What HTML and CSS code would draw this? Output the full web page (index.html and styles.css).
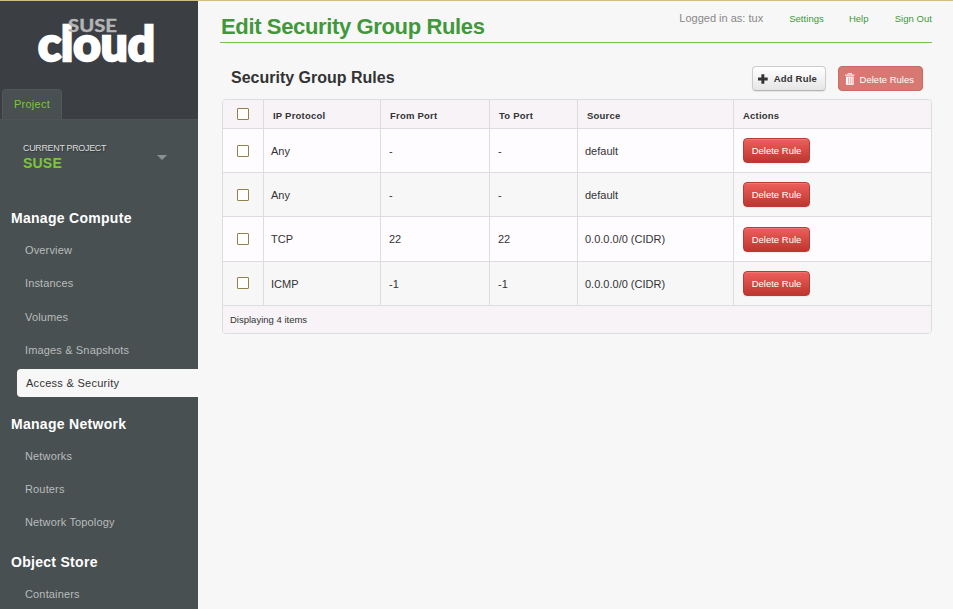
FILE: index.html
```html
<!DOCTYPE html>
<html lang="en">
<head>
<meta charset="utf-8">
<title>Edit Security Group Rules</title>
<link rel="stylesheet" href="styles.css">
</head>
<body>
<div class="layout">
  <aside class="sidebar">
    <header class="brand">
      <svg class="logo" width="118" height="46" viewBox="37 17 118 46" role="img" aria-label="SUSE Cloud">
        <text class="logo-cloud" x="38" y="59.500" textLength="117" lengthAdjust="spacingAndGlyphs">cloud</text>
        <text class="logo-suse" x="68" y="31" textLength="49" lengthAdjust="spacingAndGlyphs">SUSE</text>
      </svg>
      <a class="tab">Project</a>
    </header>
    <div class="project">
      <div>
        <div class="project-label">CURRENT PROJECT</div>
        <div class="project-name">SUSE</div>
      </div>
      <span class="caret"></span>
    </div>
    <nav>
      <h4>Manage Compute</h4>
      <ul>
        <li><a>Overview</a></li>
        <li><a>Instances</a></li>
        <li><a>Volumes</a></li>
        <li><a>Images &amp; Snapshots</a></li>
        <li class="active"><a>Access &amp; Security</a></li>
      </ul>
      <h4>Manage Network</h4>
      <ul>
        <li><a>Networks</a></li>
        <li><a>Routers</a></li>
        <li><a>Network Topology</a></li>
      </ul>
      <h4>Object Store</h4>
      <ul>
        <li><a>Containers</a></li>
      </ul>
    </nav>
  </aside>
  <main class="content">
    <header class="page-header">
      <h1>Edit Security Group Rules</h1>
      <div class="user">
        <span class="who">Logged in as: tux</span>
        <a class="settings">Settings</a>
        <a class="help">Help</a>
        <a>Sign Out</a>
      </div>
    </header>
    <section class="panel">
      <div class="toolbar">
        <h2>Security Group Rules</h2>
        <button class="btn btn-add"><svg width="10" height="10" viewBox="0 0 10 10"><path d="M3.5 0h3v3.5H10v3H6.500V10h-3V6.500H0v-3h3.500z" fill="#333"/></svg><span>Add Rule</span></button>
        <button class="btn btn-delete"><svg width="10" height="12" viewBox="0 0 10 12"><path d="M3 1.500V.5h4v1M0 2h10" fill="none" stroke="#fff"/><path d="M1 3.500h8V12H1z" fill="#fff"/><path d="M3.500 4.500V11M5.500 4.500V11M7.500 4.500V11" stroke="#d9807a" stroke-width=".7"/></svg><span>Delete Rules</span></button>
      </div>
      <table>
        <colgroup><col class="c1"><col class="c2"><col class="c3"><col class="c4"><col class="c5"><col></colgroup>
        <thead>
          <tr><th class="check"><i class="box"></i></th><th>IP Protocol</th><th>From Port</th><th>To Port</th><th>Source</th><th>Actions</th></tr>
        </thead>
        <tbody>
          <tr><td class="check"><i class="box"></i></td><td>Any</td><td>-</td><td>-</td><td>default</td><td class="act"><button class="btn btn-danger">Delete Rule</button></td></tr>
          <tr><td class="check"><i class="box"></i></td><td>Any</td><td>-</td><td>-</td><td>default</td><td class="act"><button class="btn btn-danger">Delete Rule</button></td></tr>
          <tr class="tall"><td class="check"><i class="box"></i></td><td>TCP</td><td>22</td><td>22</td><td>0.0.0.0/0 (CIDR)</td><td class="act"><button class="btn btn-danger">Delete Rule</button></td></tr>
          <tr><td class="check"><i class="box"></i></td><td>ICMP</td><td>-1</td><td>-1</td><td>0.0.0.0/0 (CIDR)</td><td class="act"><button class="btn btn-danger">Delete Rule</button></td></tr>
        </tbody>
        <tfoot><tr><td colspan="6">Displaying 4 items</td></tr></tfoot>
      </table>
    </section>
  </main>
</div>
</body>
</html>
```
FILE: styles.css
```css
* { box-sizing: border-box; }
body {
  margin: 0;
  height: 609px;
  overflow: hidden;
  border-top: 1px solid #d3ba8a;
  background: #f7f7f7;
  color: #333;
  font-family: "Liberation Sans", Arial, sans-serif;
  font-size: 11px;
}
h1, h2, h4, ul { margin: 0; padding: 0; }
.layout { display: flex; height: 608px; }

/* Sidebar */
.sidebar {
  width: 198px;
  flex: none;
  background: #485051;
  overflow: hidden;
}
.brand {
  height: 119px;
  background: #3b3e43;
  border-bottom: 1px solid #4e5455;
  padding-left: 2px;
  display: flex;
  flex-direction: column;
  justify-content: space-between;
  align-items: flex-start;
}
.logo { margin: 17px 0 0 35px; display: block; overflow: visible; }
.logo text { font-family: Lato, sans-serif; }
.logo-cloud { font-size: 48px; font-weight: 900; fill: #fff; stroke: #fff; stroke-width: 2.500px; }
.logo-suse { font-size: 16.500px; font-weight: 700; fill: #b4b5b7; stroke: #b4b5b7; stroke-width: .4px; }
.tab {
  width: 60px;
  height: 30px;
  line-height: 28px;
  padding-left: 11px;
  border: 1px solid #515859;
  border-bottom: 0;
  border-radius: 4px 4px 0 0;
  background: #485051;
  color: #7cc63c;
  letter-spacing: .25px;
}
.project {
  height: 79px;
  padding: 23px 31px 0 23px;
  display: flex;
  justify-content: space-between;
}
.project-label {
  font-size: 9px;
  line-height: 11px;
  letter-spacing: -.35px;
  color: #ddd;
  text-shadow: 1px 1px 1px #303536;
}
.project-name {
  font-size: 14px;
  line-height: 18px;
  font-weight: bold;
  letter-spacing: .2px;
  color: #7cc63c;
}
.caret {
  height: 0;
  margin-top: 12px;
  border: 5px solid transparent;
  border-top-color: #8a9192;
  border-bottom: 0;
}
nav h4 {
  height: 34.500px;
  line-height: 38px;
  padding-left: 11px;
  font-size: 14px;
  letter-spacing: .29px;
  color: #fff;
}
nav ul { list-style: none; margin-bottom: 5px; }
nav li {
  height: 33.300px;
  padding-left: 17px;
  display: flex;
  align-items: center;
}
nav ul + h4 ~ ul li { height: 33px; }
nav li a {
  flex: 1;
  height: 28px;
  line-height: 28px;
  padding-left: 8px;
  color: #b9bcbc;
  letter-spacing: .15px;
}
nav .active a {
  padding-left: 9px;
  background: #f7f7f7;
  color: #333;
  border-radius: 4px 0 0 4px;
  letter-spacing: .28px;
}

/* Content */
.content { flex: 1; padding: 0 21px 0 22px; }
.page-header {
  height: 42px;
  border-bottom: 1px solid #7ac142;
  display: flex;
  justify-content: space-between;
}
h1 {
  padding-left: 1px;
  font-size: 22px;
  line-height: 51px;
  letter-spacing: -.36px;
  color: #41983a;
  white-space: nowrap;
}
.user {
  display: flex;
  align-items: baseline;
  line-height: 35px;
  font-size: 9.500px;
  color: #41983a;
}
.who { font-size: 11px; color: #888; margin-right: 26px; }
.settings { margin-right: 25px; }
.help { margin-right: 26px; }
.user a { letter-spacing: .05px; }
.panel { padding-left: 2px; }
.toolbar {
  height: 56px;
  padding: 23px 9px 0 9px;
  display: flex;
  align-items: flex-start;
}
h2 { flex: 1; font-size: 16px; line-height: 23px; }
.btn {
  display: flex;
  align-items: center;
  height: 25px;
  padding: 0 8px;
  border-radius: 4px;
  font: 9.500px "Liberation Sans", Arial, sans-serif;
  white-space: nowrap;
}
.btn-add {
  width: 74px;
  padding-left: 5px;
  border: 1px solid #ccc;
  border-bottom-color: #b5b5b5;
  background: linear-gradient(#fff, #e6e6e6);
  color: #333;
  font-weight: bold;
  letter-spacing: .2px;
  margin-right: 12px;
  box-shadow: 0 1px 1px rgba(0,0,0,.08);
}
.btn-add span { margin-left: 6px; }
.btn-delete {
  width: 85px;
  padding-left: 6px;
  border: 1px solid #cb6a63;
  background: #d87872;
  color: #fff;
}
.btn-delete span { margin: 1px 0 0 5px; }
.btn-danger {
  width: 67px;
  border: 1px solid #bd3a32;
  background: linear-gradient(#ee5f5b, #bd362f);
  box-shadow: inset 0 1px 0 rgba(255,255,255,.15), 0 1px 1px rgba(0,0,0,.06);
  color: #fff;
  justify-content: center;
  padding: 0;
}
table {
  width: 710px;
  table-layout: fixed;
  border-collapse: separate;
  border-spacing: 0;
  border: 1px solid #ddd;
  border-radius: 4px;
  overflow: hidden;
}
.c1 { width: 40px; }
.c2 { width: 117px; }
.c3 { width: 109px; }
.c4 { width: 88px; }
.c5 { width: 156px; }
th, td { padding: 0 0 0 7px; text-align: left; border-left: 1px solid #ddd; }
tr > :first-child { border-left: 0; }
th {
  height: 28px;
  padding: 3px 0 0 9px;
  background: #f7f3f7;
  font-size: 9.500px;
  letter-spacing: .22px;
}
td { height: 44px; border-top: 1px solid #ddd; background: #fffcff; }
tbody td:nth-child(3), tbody td:nth-child(4) { padding-left: 8px; }
tbody tr:nth-child(even) td { background: #f7f7f7; }
.tall td { height: 45px; }
th.check, td.check { padding: 0 0 0 14px; }
tbody tr:nth-child(n+3) td.check { padding-bottom: 1px; }
.box {
  display: block;
  width: 12px;
  height: 12px;
  border: 1px solid #94804c;
  border-radius: 1px;
  background: #fff;
}
td.act { padding-left: 9px; }
tfoot td { height: 28px; background: #f7f3f7; font-size: 9.500px; }
```
